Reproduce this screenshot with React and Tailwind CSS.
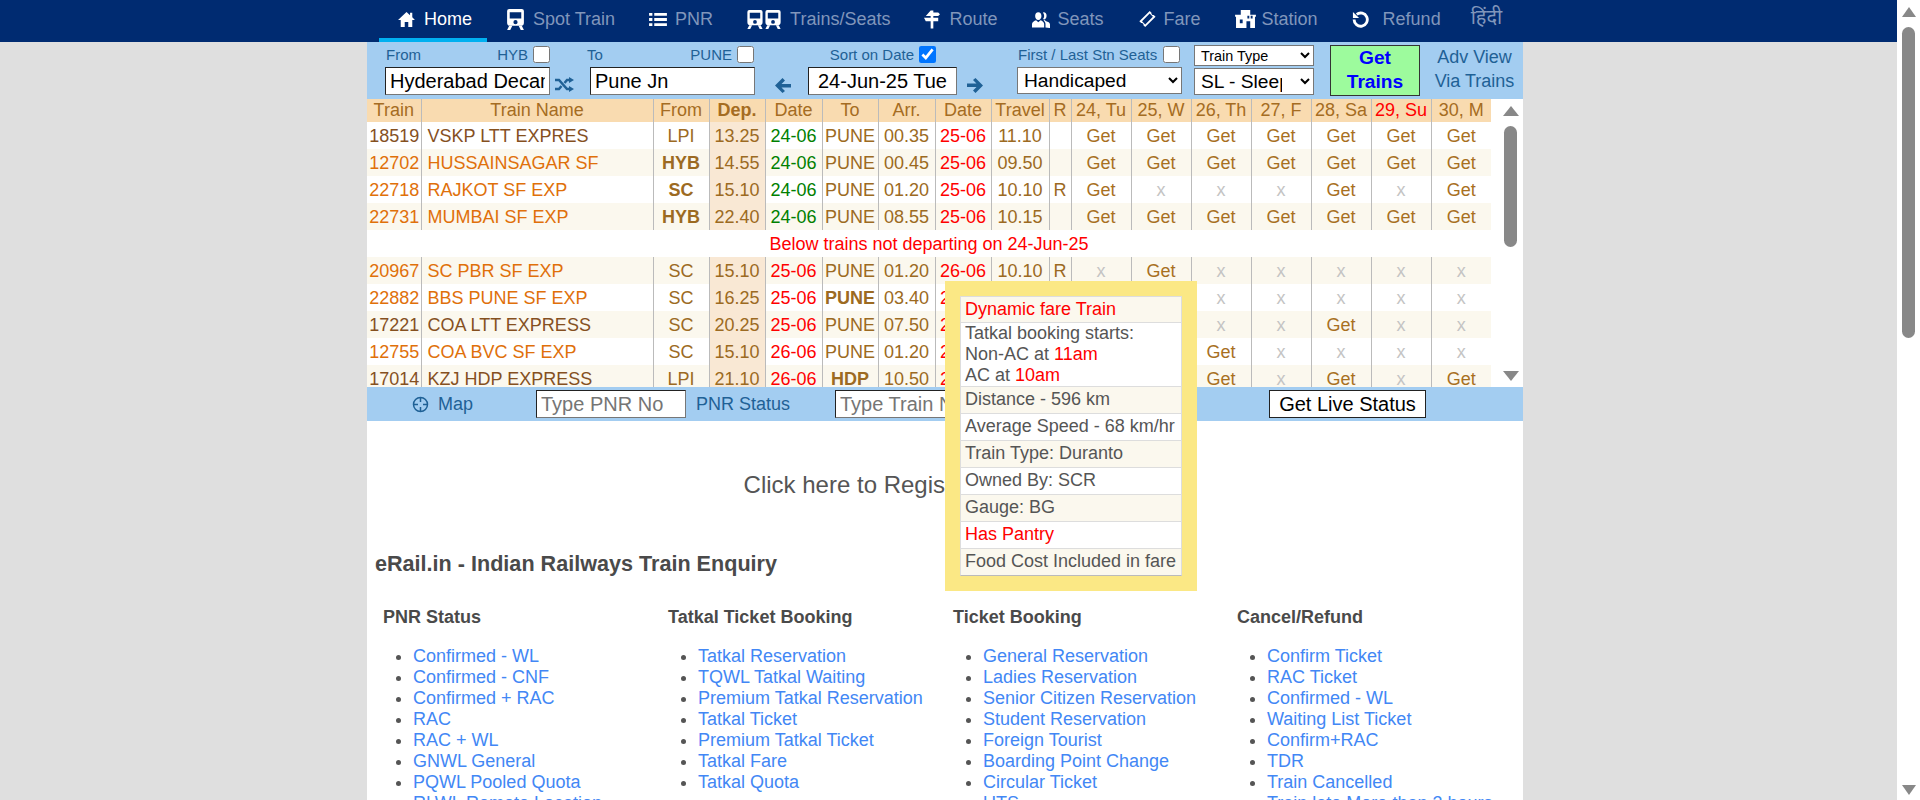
import React from "react";

const navItems = [
  { label: "Home", icon: "home", gap: "gap-[9px]", active: true },
  { label: "Spot Train", icon: "spot", gap: "gap-[9px]" },
  { label: "PNR", icon: "list", gap: "gap-[8px]" },
  { label: "Trains/Seats", icon: "trains", gap: "gap-[9px]" },
  { label: "Route", icon: "route", gap: "gap-[9px]" },
  { label: "Seats", icon: "seats", gap: "gap-[8px]" },
  { label: "Fare", icon: "fare", gap: "gap-[8px]" },
  { label: "Station", icon: "station", gap: "gap-[6px]" },
  { label: "Refund", icon: "refund", gap: "gap-[14px]" },
];

function TrainGlyph({ x = 0 }) {
  return (
    <g transform={`translate(${x} 0)`}>
      <path
        fillRule="evenodd"
        d="M2 0h12a2 2 0 0 1 2 2v11a3 3 0 0 1-3 3H3a3 3 0 0 1-3-3V2a2 2 0 0 1 2-2zM2.500 3v6h11V3zM8 10.500a2 2 0 1 0 0 4 2 2 0 0 0 0-4z"
      />
    </g>
  );
}

function NavIcon({ name }) {
  if (name === "home")
    return (
      <svg width="17" height="16" viewBox="0 0 19 18" fill="white">
        <path d="M9.500 1 0 10h3v8h4.500v-5.500h4V18H16v-8h3l-3-2.900V2h-2.500v2.700z" />
      </svg>
    );
  if (name === "spot")
    return (
      <svg width="17" height="21" viewBox="0 0 16 20" fill="white">
        <TrainGlyph />
        <path d="M2 16h3l-2 4H0zM11 16h3l2 4h-3z" />
      </svg>
    );
  if (name === "list")
    return (
      <svg width="18" height="15" viewBox="0 0 19 16" fill="white">
        <path d="M0 1h3.500v3H0zM5.500 1H19v3H5.500zM0 6.500h3.500v3H0zM5.500 6.500H19v3H5.500zM0 12h3.500v3H0zM5.500 12H19v3H5.500z" />
      </svg>
    );
  if (name === "trains")
    return (
      <svg width="34" height="19" viewBox="0 0 35 20" fill="white">
        <TrainGlyph />
        <path d="M2 16h3l-2 4H0zM11 16h3l2 4h-3z" />
        <TrainGlyph x={19} />
        <path d="M21 16h3l-2 4h-3zM30 16h3l2 4h-3z" />
      </svg>
    );
  if (name === "route")
    return (
      <svg width="16" height="19" viewBox="0 0 18 20" fill="white">
        <path d="M7.500 0h3v2H16l2 2-2 2H2zM0 8h16v4H2zM7.500 6h3v2h-3zM7.500 12h3v8h-3z" />
      </svg>
    );
  if (name === "seats")
    return (
      <svg width="18" height="17" viewBox="0 0 20 18" fill="white">
        <path d="M7 1c2.200 0 3.500 1.800 3.500 4S9.200 9.500 7 9.500 3.500 7.200 3.500 5 4.800 1 7 1zM0 18v-4c0-2 2.500-3.500 4.500-4.200L7 12l2.500-2.200c2 .7 4 2.200 4 4.200v4z" />
        <path d="M13 1c2 0 3.200 1.700 3.200 3.800S15 9 13.500 9c-.5 0-1-.2-1.400-.5C13 7.500 13.500 6.200 13.500 5c0-1.300-.4-2.600-1.200-3.600.2-.2.400-.4.700-.4zM15 18v-4c0-1.600-.9-2.900-2.200-3.900l1.200-.6 1.700 1.500c2 .6 4.300 1.500 4.300 3.500v4z" />
      </svg>
    );
  if (name === "fare")
    return (
      <svg width="18" height="18" viewBox="0 0 20 20" fill="white">
        <path
          fillRule="evenodd"
          d="M13 1l2 2a2 2 0 0 0 2.500 2.500L19.500 7.500 8 19l-2-2a2 2 0 0 0-2.500-2.500L1.500 12.500zM13 4 4.500 12.500l3.500 3.500L16.500 7.500z"
        />
      </svg>
    );
  if (name === "station")
    return (
      <svg width="21" height="18" viewBox="0 0 22 19" fill="white">
        <path
          fillRule="evenodd"
          d="M6 0h10v5h6v2h-1v12h-5v-7h-4v7H1V7H0V5h6zM5 10v4h3v-4zM13 6v3h2V6zM16.500 6v3h2V6z"
        />
      </svg>
    );
  return (
    <svg width="17" height="17" viewBox="0 0 18 18" fill="none" stroke="white" strokeWidth="3">
      <path d="M5 3.500A7 7 0 1 1 2.200 9" />
      <path d="M1 1v6.500h6.500z" fill="white" stroke="none" />
    </svg>
  );
}

function TopNav() {
  return (
    <nav className="flex h-[42px] shrink-0 bg-[#002b71] pl-[379px] text-[18px] leading-[42px]">
      {navItems.map((item) => (
        <a
          key={item.label}
          className={
            item.active
              ? `flex h-[42px] items-center ${item.gap} border-b-[4px] border-[#00b0f0] pl-[19px] pr-[15px] text-white`
              : `flex h-[42px] items-center ${item.gap} pb-[4px] pl-[20px] pr-[14px] text-[#8096bb]`
          }
        >
          <NavIcon name={item.icon} />
          <span>{item.label}</span>
        </a>
      ))}
      <a className="ml-[16px] flex h-[34px] items-center font-['Noto_Sans','Liberation_Sans',sans-serif] text-[20px] text-[#8096bb]">
        हिंदी
      </a>
    </nav>
  );
}

function Arrow({ flip }) {
  return (
    <svg width="16" height="15" viewBox="0 0 16 15" fill="#1f6196" className={flip ? "rotate-180" : ""}>
      <path d="M7.500 0 10 2.500 6.500 6H16v3.500H6.500L10 13l-2.500 2L0 7.500z" />
    </svg>
  );
}

const fieldClass =
  "h-[28px] w-full border border-[#222] border-r-[#777] border-b-[#777] bg-white px-[4px] text-[20px] text-black";

function Label({ children }) {
  return <span className="text-[15px] leading-[18px] text-[#1f6196]">{children}</span>;
}

function SearchForm() {
  return (
    <div className="flex h-[57px] shrink-0 bg-[#a3cdf1] pl-[18px]">
      <div className="w-[165px] shrink-0">
        <div className="flex h-[25px] items-center justify-between pl-[1px]">
          <Label>From</Label>
          <span className="flex items-center gap-[5px]">
            <Label>HYB</Label>
            <input type="checkbox" className="m-0 h-[17px] w-[17px]" />
          </span>
        </div>
        <input readOnly value="Hyderabad Decan" className={fieldClass} />
      </div>
      <div className="flex w-[40px] shrink-0 items-end pb-[7px] pl-[5px]">
        <svg width="19" height="15" viewBox="0 0 19 15" fill="none" stroke="#1f6196" strokeWidth="2.500">
          <path d="M0 3h4l8 9h3M0 12h4l2.500-3M9.500 6 12 3h3" />
          <path d="M14 0l5 3-5 3zM14 9l5 3-5 3z" fill="#1f6196" stroke="none" />
        </svg>
      </div>
      <div className="w-[165px] shrink-0">
        <div className="-ml-[3px] flex h-[25px] items-center justify-between">
          <Label>To</Label>
          <span className="flex items-center gap-[5px]">
            <Label>PUNE</Label>
            <input type="checkbox" className="m-0 mr-[1px] h-[17px] w-[17px]" />
          </span>
        </div>
        <input readOnly value="Pune Jn" className={fieldClass} />
      </div>
      <div className="flex w-[53px] shrink-0 items-end justify-center pb-[6px] pl-[3px]">
        <Arrow />
      </div>
      <div className="w-[149px] shrink-0">
        <div className="flex h-[25px] items-center justify-end gap-[5px] pr-[21px]">
          <Label>Sort on Date</Label>
          <input type="checkbox" defaultChecked className="m-0 h-[17px] w-[17px]" />
        </div>
        <input readOnly value="24-Jun-25 Tue" className={`${fieldClass} pl-[9px]`} />
      </div>
      <div className="flex w-[60px] shrink-0 items-end pb-[6px] pl-[10px]">
        <Arrow flip />
      </div>
      <div className="w-[165px] shrink-0">
        <div className="flex h-[25px] items-center justify-between pl-[1px] pr-[2px]">
          <Label>First / Last Stn Seats</Label>
          <input type="checkbox" className="m-0 h-[17px] w-[17px]" />
        </div>
        <select className="h-[27px] w-full border border-[#777] bg-white pl-[2px] text-[19.200px] text-black">
          <option>Handicaped</option>
        </select>
      </div>
      <div className="ml-[12px] w-[120px] shrink-0 pt-[3px]">
        <select className="mb-[2px] block h-[21px] w-full border border-[#777] bg-white pl-[2px] text-[14.400px] text-black">
          <option>Train Type</option>
        </select>
        <select className="block h-[27px] w-full border border-[#777] bg-white pl-[2px] pr-[15px] text-[19.200px] text-black">
          <option>SL - Sleeper</option>
        </select>
      </div>
      <div className="ml-[16px] pt-[3px]">
        <button className="h-[51px] w-[90px] border border-[#333] bg-[#9dfb9d] pb-[2px] text-center text-[19.200px] leading-[24px] font-bold text-[#0000ff]">
          Get Trains
        </button>
      </div>
      <div className="flex w-[104px] flex-col items-center pt-[3px] pl-[6px] text-[18px] leading-[24px] text-[#1f6196]">
        <a>Adv View</a>
        <a>Via Trains</a>
      </div>
    </div>
  );
}

const colWidths = [54, 232, 56, 56, 57, 56, 57, 56, 58, 22, 60, 60, 60, 60, 60, 60, 60];
const dayHeads = ["24, Tu", "25, W", "26, Th", "27, F", "28, Sa", "29, Su", "30, M"];
const G = "Get";
const X = "x";
const trains = [
  ["18519", "VSKP LTT EXPRES", "LPI", "13.25", "24-06", "PUNE", "00.35", "25-06", "11.10", "", [G, G, G, G, G, G, G]],
  ["12702", "HUSSAINSAGAR SF", "HYB", "14.55", "24-06", "PUNE", "00.45", "25-06", "09.50", "", [G, G, G, G, G, G, G], "fast", "from"],
  ["22718", "RAJKOT SF EXP", "SC", "15.10", "24-06", "PUNE", "01.20", "25-06", "10.10", "R", [G, X, X, X, G, X, G], "fast", "from"],
  ["22731", "MUMBAI SF EXP", "HYB", "22.40", "24-06", "PUNE", "08.55", "25-06", "10.15", "", [G, G, G, G, G, G, G], "fast", "from"],
];
const laterTrains = [
  ["20967", "SC PBR SF EXP", "SC", "15.10", "25-06", "PUNE", "01.20", "26-06", "10.10", "R", [X, G, X, X, X, X, X], "fast"],
  ["22882", "BBS PUNE SF EXP", "SC", "16.25", "25-06", "PUNE", "03.40", "26-06", "11.15", "", [X, X, X, X, X, X, X], "fast", "to"],
  ["17221", "COA LTT EXPRESS", "SC", "20.25", "25-06", "PUNE", "07.50", "26-06", "11.25", "", [X, X, X, X, G, X, X]],
  ["12755", "COA BVC SF EXP", "SC", "15.10", "26-06", "PUNE", "01.20", "27-06", "10.10", "", [X, X, G, X, X, X, X], "fast"],
  ["17014", "KZJ HDP EXPRESS", "LPI", "21.10", "26-06", "HDP", "10.50", "27-06", "13.40", "", [X, X, G, X, G, X, G], "", "to"],
];

const cell = "border-l border-[#bbb] p-0 text-center";

function TrainRow({ row, striped, green }) {
  const [num, name, from, dep, date, to, arr, arrDate, travel, r, days, kind, boldAt] = row;
  const nameColor = kind === "fast" ? "text-[#e0700a]" : "text-[#85501f]";
  return (
    <tr className={`h-[27px] ${striped ? "bg-[#fbf8ee]" : "bg-white"}`}>
      <td className={`p-0 pl-[1px] text-center ${nameColor}`}>{num}</td>
      <td className={`border-l border-[#bbb] p-0 pl-[6px] text-left whitespace-nowrap ${nameColor}`}>{name}</td>
      <td className={`${cell} text-[#9c6a22] ${boldAt === "from" ? "font-bold" : ""}`}>{from}</td>
      <td className={`${cell} bg-[#f9e8d4] text-[#9c6a22]`}>{dep}</td>
      <td className={`${cell} ${green ? "text-[#008000]" : "text-[#ff0000]"}`}>{date}</td>
      <td className={`${cell} text-[#9c6a22] ${boldAt === "to" ? "font-bold" : ""}`}>{to}</td>
      <td className={`${cell} text-[#9c6a22]`}>{arr}</td>
      <td className={`${cell} text-[#ff0000]`}>{arrDate}</td>
      <td className={`${cell} text-[#9c6a22]`}>{travel}</td>
      <td className={`${cell} text-[#9c6a22]`}>{r}</td>
      {days.map((d, i) => (
        <td key={i} className={`${cell} ${d === G ? "text-[#a8701f]" : "text-[#c4c4c4]"}`}>
          {d}
        </td>
      ))}
    </tr>
  );
}

function TrainTable() {
  const heads = ["Train", "Train Name", "From", "Dep.", "Date", "To", "Arr.", "Date", "Travel", "R", ...dayHeads];
  return (
    <div className="flex h-[288px] shrink-0 overflow-hidden">
      <div className="h-[288px] w-[1124px] shrink-0 overflow-hidden">
        <table className="w-[1124px] table-fixed border-collapse text-[18px] leading-[20px]">
          <colgroup>
            {colWidths.map((w, i) => (
              <col key={i} style={{ width: w }} />
            ))}
          </colgroup>
          <thead>
            <tr className="h-[23px] bg-[#f9dbb0] text-[#a56c22]">
              {heads.map((h, i) => (
                <th
                  key={i}
                  className={`p-0 pb-[2px] text-center whitespace-nowrap ${i > 0 ? "border-l border-[#bbb]" : ""} ${
                    h === "Dep." ? "font-bold" : "font-normal"
                  } ${h === "29, Su" ? "text-[#ff0000]" : ""}`}
                >
                  {h}
                </th>
              ))}
            </tr>
          </thead>
          <tbody>
            {trains.map((row, i) => (
              <TrainRow key={row[0]} row={row} striped={i % 2 === 1} green />
            ))}
            <tr className="h-[27px] bg-white">
              <td colSpan={17} className="p-0 text-center text-[#ff0000]">
                Below trains not departing on 24-Jun-25
              </td>
            </tr>
            {laterTrains.map((row, i) => (
              <TrainRow key={row[0]} row={row} striped={i % 2 === 0} />
            ))}
          </tbody>
        </table>
      </div>
      <div className="flex w-[31px] shrink-0 flex-col items-center bg-white pl-[8px]">
        <div className="mt-[7px] h-0 w-0 border-x-[8px] border-b-[10px] border-x-transparent border-b-[#888]" />
        <div className="mt-[10px] h-[121px] w-[13px] rounded-full bg-[#888]" />
        <div className="mt-[124px] h-0 w-0 border-x-[8px] border-t-[10px] border-x-transparent border-t-[#888]" />
      </div>
    </div>
  );
}

function LiveBar() {
  return (
    <div className="flex h-[34px] shrink-0 items-center bg-[#a3cdf1] text-[#1f6196]">
      <svg width="17" height="17" viewBox="0 0 17 17" fill="none" stroke="#1f6196" strokeWidth="1.500" className="ml-[45px]">
        <circle cx="8.500" cy="8.500" r="7" />
        <path d="M8.500 1v5M8.500 11v5M1 8.500h5M11 8.500h5" />
      </svg>
      <a className="ml-[9px] w-[98px] text-[18px]">Map</a>
      <input
        placeholder="Type PNR No"
        className="h-[28px] w-[150px] border border-[#222] border-r-[#777] border-b-[#777] bg-white px-[4px] text-[20px] placeholder:text-[#757575]"
      />
      <a className="ml-[10px] w-[139px] text-[18px]">PNR Status</a>
      <input
        placeholder="Type Train No"
        className="h-[28px] w-[150px] border border-[#222] border-r-[#777] border-b-[#777] bg-white px-[4px] text-[20px] placeholder:text-[#757575]"
      />
      <button className="ml-[284px] h-[28px] w-[157px] border border-[#222] bg-white pb-[1px] text-[20px] leading-none text-black">
        Get Live Status
      </button>
    </div>
  );
}

const tipRows = [
  { first: true, text: <span className="text-[#ff0000]">Dynamic fare Train</span> },
  {
    tall: true,
    text: (
      <>
        Tatkal booking starts:
        <br />
        Non-AC at <span className="text-[#ff0000]">11am</span>
        <br />
        AC at <span className="text-[#ff0000]">10am</span>
      </>
    ),
  },
  { text: "Distance - 596 km" },
  { text: "Average Speed - 68 km/hr" },
  { text: "Train Type: Duranto" },
  { text: "Owned By: SCR" },
  { text: "Gauge: BG" },
  { text: <span className="text-[#ff0000]">Has Pantry</span> },
  { text: "Food Cost Included in fare" },
];

function tipPadding(row) {
  if (row.tall) return "py-0";
  if (row.first) return "pt-[2px] pb-[2px]";
  return "pt-[2px] pb-[3px]";
}

function TrainTooltip() {
  return (
    <div className="absolute top-[239px] left-[578px] w-[252px] bg-[#fbe885] p-[15px]">
      <div className="border border-[#ddd] border-b-[#bbb] text-[18px] leading-[21px] text-[#555]">
        {tipRows.map((row, i) => (
          <div
            key={i}
            className={`whitespace-nowrap border-[#ddd] pl-[4px] ${tipPadding(row)} ${i > 0 ? "border-t" : ""} ${
              i % 2 === 0 ? "bg-[#fbf8ee]" : "bg-white"
            }`}
          >
            {row.text}
          </div>
        ))}
      </div>
    </div>
  );
}

const linkCols = [
  {
    title: "PNR Status",
    links: ["Confirmed - WL", "Confirmed - CNF", "Confirmed + RAC", "RAC", "RAC + WL", "GNWL General", "PQWL Pooled Quota", "RLWL Remote Location"],
  },
  {
    title: "Tatkal Ticket Booking",
    links: ["Tatkal Reservation", "TQWL Tatkal Waiting", "Premium Tatkal Reservation", "Tatkal Ticket", "Premium Tatkal Ticket", "Tatkal Fare", "Tatkal Quota"],
  },
  {
    title: "Ticket Booking",
    links: ["General Reservation", "Ladies Reservation", "Senior Citizen Reservation", "Student Reservation", "Foreign Tourist", "Boarding Point Change", "Circular Ticket", "UTS"],
  },
  {
    title: "Cancel/Refund",
    links: ["Confirm Ticket", "RAC Ticket", "Confirmed - WL", "Waiting List Ticket", "Confirm+RAC", "TDR", "Train Cancelled", "Train late More than 3 hours"],
  },
];

function LinkSection() {
  return (
    <div className="text-[#555]">
      <p className="pt-[50px] pr-[12px] text-center text-[24px] leading-[28px]">Click here to Register for Train Alerts</p>
      <h2 className="mt-[51px] pl-[8px] text-[21.600px] leading-[28px] font-bold text-[#4a4a4a]">
        eRail.in - Indian Railways Train Enquiry
      </h2>
      <div className="mt-[28px] grid grid-cols-[285px_285px_284px_1fr] pl-[16px]">
        {linkCols.map((col) => (
          <div key={col.title}>
            <h3 className="text-[18px] leading-[22px] font-bold text-[#4a4a4a]">{col.title}</h3>
            <ul className="mt-[18px] list-disc pl-[30px] text-[18px] leading-[21px]">
              {col.links.map((link) => (
                <li key={link}>
                  <a className="whitespace-nowrap text-[#4287f5]">{link}</a>
                </li>
              ))}
            </ul>
          </div>
        ))}
      </div>
    </div>
  );
}

export default function App() {
  return (
    <div className="flex h-[800px] overflow-hidden font-['Liberation_Sans',Arial,sans-serif]">
      <div className="flex w-[1897px] shrink-0 flex-col">
        <TopNav />
        <div className="min-h-0 flex-1 bg-[#dfdfdf]">
          <main className="relative ml-[367px] flex h-full w-[1156px] flex-col overflow-hidden bg-white">
            <SearchForm />
            <TrainTable />
            <LiveBar />
            <LinkSection />
            <TrainTooltip />
          </main>
        </div>
      </div>
      <div className="flex w-[23px] flex-col items-center bg-white">
        <div className="mt-[7px] h-0 w-0 border-x-[7px] border-b-[10px] border-x-transparent border-b-[#888]" />
        <div className="mt-[10px] h-[311px] w-[13px] rounded-full bg-[#888]" />
        <div className="mt-auto mb-[5px] h-0 w-0 border-x-[7px] border-t-[10px] border-x-transparent border-t-[#888]" />
      </div>
    </div>
  );
}
